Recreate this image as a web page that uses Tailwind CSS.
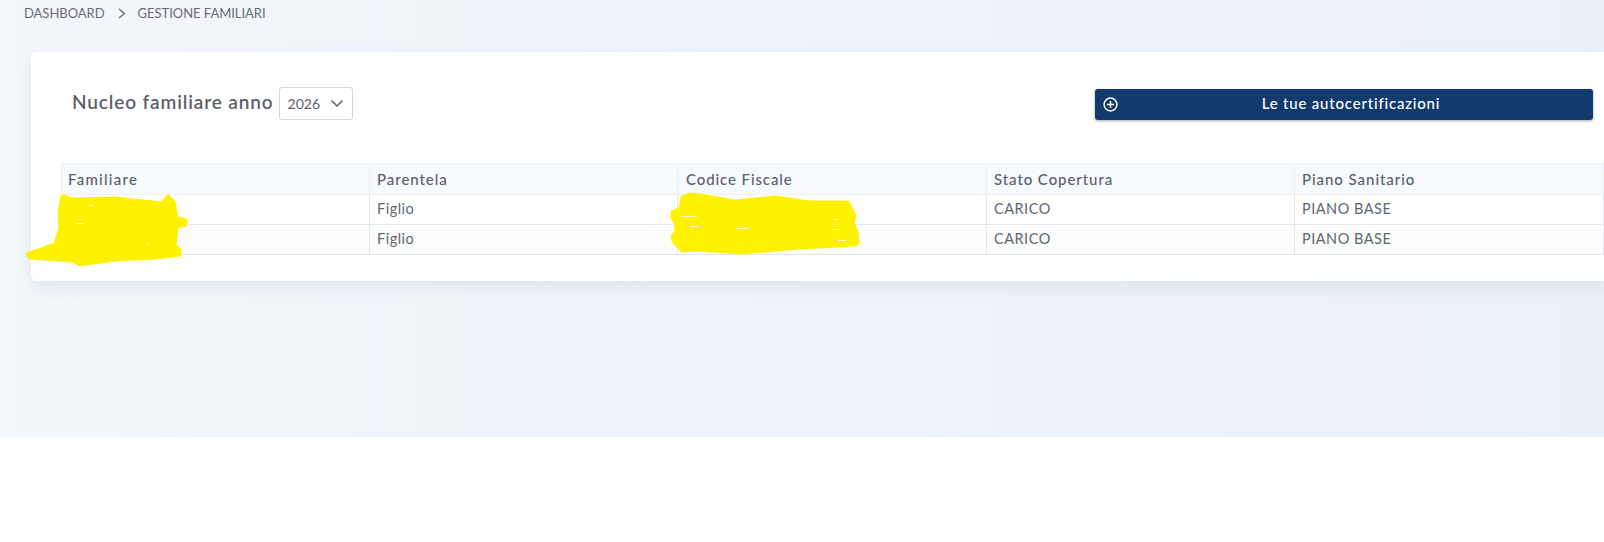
<!DOCTYPE html>
<html lang="it">
<head>
<meta charset="utf-8">
<title>Gestione familiari</title>
<script src="https://cdn.jsdelivr.net/npm/@tailwindcss/browser@4"></script>
</head>
<body class="bg-white font-['Lato','Noto_Sans',sans-serif] overflow-hidden">
<div class="relative w-[1604px] h-[542px] overflow-hidden">
  <div class="h-[437px] bg-linear-to-r from-[#f3f6fb] to-[#eaf0f7]">
    <nav class="h-[52px] pl-[24px] pt-[5px] flex items-start text-[13px] leading-[17px] tracking-[-0.03px] text-[#666d78]">
      <span>DASHBOARD</span>
      <svg class="ml-[12px] mr-[11px] mt-[3px]" width="10" height="11" viewBox="0 0 10 11" fill="none" stroke="#5f6670" stroke-width="1.2"><path d="M2 1l5.5 4.5L2 10"/></svg>
      <span>GESTIONE FAMILIARI</span>
    </nav>
    <main class="ml-[31px] h-[229px] bg-white rounded-l-md shadow-[0_6px_16px_rgba(150,165,190,0.18)] pt-[35px]">
      <div class="flex items-start justify-between pl-[41px] pr-[11px] h-[76px]">
        <div class="flex items-start gap-[5px]">
          <h1 class="text-[19px] leading-[30px] font-semibold tracking-[0.87px] text-[#5b606a]">Nucleo familiare anno</h1>
          <div class="w-[74px] h-[33px] border border-[#d3d6dd] rounded-[3px] pl-[8px] pr-[8px] flex items-center justify-between text-[14px] text-[#5b606a]">
            <span>2026</span>
            <svg width="14" height="9" viewBox="0 0 14 9" fill="none" stroke="#5b606a" stroke-width="1.5"><path d="M1.5 1.5L7 7l5.5-5.5"/></svg>
          </div>
        </div>
        <button class="relative mt-[2px] w-[498px] h-[31px] pl-[14px] pb-[2px] rounded-[3px] bg-[#133a6d] shadow-[0_1px_3px_rgba(0,0,0,0.35)] text-white text-[15px] font-medium tracking-[0.8px] flex items-center justify-center">
          <svg class="absolute left-[8px] top-[8px]" width="15" height="15" viewBox="0 0 15 15" fill="none" stroke="#fff" stroke-width="1.5"><circle cx="7.5" cy="7.5" r="6.4"/><path d="M7.5 4v7M4 7.5h7"/></svg>
          Le tue autocertificazioni
        </button>
      </div>
      <div class="pl-[30px] pr-px">
        <table class="w-[1543px] table-fixed border-collapse text-[14.5px] text-[#5f6672]">
          <thead class="text-[15px] text-[#5b606a]">
            <tr class="h-[31px] bg-[#f6f9fd] text-left">
              <th class="w-[308px] border border-[#edf0f5] pl-[6px] font-medium tracking-[1.25px]">Familiare</th>
              <th class="w-[308px] border border-[#edf0f5] pl-[7px] font-medium tracking-[0.95px]">Parentela</th>
              <th class="w-[309px] border border-[#edf0f5] pl-[8px] font-medium tracking-[0.9px]">Codice Fiscale</th>
              <th class="w-[308px] border border-[#edf0f5] pl-[7px] font-medium tracking-[0.92px]">Stato Copertura</th>
              <th class="border border-[#edf0f5] pl-[7px] font-medium tracking-[0.95px]">Piano Sanitario</th>
            </tr>
          </thead>
          <tbody class="tracking-[0.5px]">
            <tr class="h-[30px] bg-white">
              <td class="border border-[#e3e6ec]"></td>
              <td class="border border-[#e3e6ec] pl-[7px] pb-[2px]">Figlio</td>
              <td class="border border-[#e3e6ec]"></td>
              <td class="border border-[#e3e6ec] pl-[7px] pb-[2px]">CARICO</td>
              <td class="border border-[#e3e6ec] pl-[7px] pb-[2px]">PIANO BASE</td>
            </tr>
            <tr class="h-[30px] bg-[#fbfdfb]">
              <td class="border border-[#e3e6ec]"></td>
              <td class="border border-[#e3e6ec] pl-[7px] pb-[2px]">Figlio</td>
              <td class="border border-[#e3e6ec]"></td>
              <td class="border border-[#e3e6ec] pl-[7px] pb-[2px]">CARICO</td>
              <td class="border border-[#e3e6ec] pl-[7px] pb-[2px]">PIANO BASE</td>
            </tr>
          </tbody>
        </table>
      </div>
    </main>
  </div>
  <svg class="absolute left-0 top-0 pointer-events-none" width="1604" height="300" viewBox="0 0 1604 300" fill="#fff200" stroke="#fff200" stroke-width="3" stroke-linejoin="round">
    <path d="M27 254L55 244L60 228L59 212L62 196L67 197L71 199L115 198L162 203L168 196L174 202L177 218L186 220L186 225L177 227L175 245L180 250L180 255L155 258L115 260L80 265L72 261L30 258Z"/>
    <path d="M690 194L700 195L735 201L775 197L810 202L848 202L853 212L855 216L853 222L857 232L858 243L855 245L800 248L740 253L700 250L682 251L673 241L672 236L676 232L675 222L672 218L672 212L680 208L682 197Z"/>
    <g stroke="#fff" stroke-width="1" fill="none" opacity="0.8">
      <path d="M89 205.500h4M76 223.500h7M105 238.500h1M146 244.500h2"/>
      <path d="M681 216.500h16M690 226.500h8M735 228.500h12M833 219.500h5M832 229.500h8M838 240.500h8"/>
    </g>
  </svg>
</div>
</body>
</html>
